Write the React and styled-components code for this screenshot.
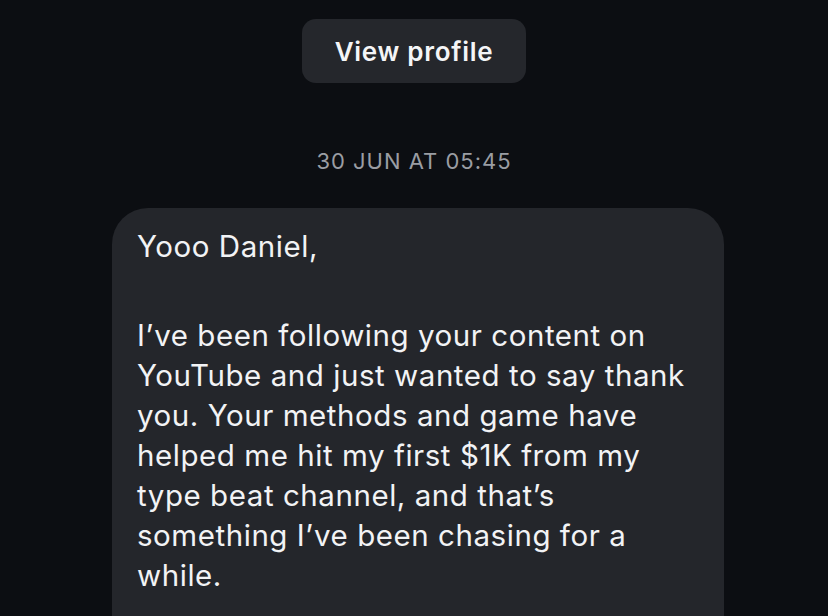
import React from 'react';
import styled, { createGlobalStyle } from 'styled-components';

const GlobalStyle = createGlobalStyle`
  html, body {
    margin: 0;
    padding: 0;
    background: #0c0e12;
  }
  body {
    font-family: Inter, "Noto Sans", sans-serif;
    -webkit-font-smoothing: antialiased;
  }
`;

const Screen = styled.div`
  width: 828px;
  height: 616px;
  overflow: hidden;
  background: #0c0e12;
  display: flex;
  flex-direction: column;
  align-items: center;
`;

const ProfileButton = styled.button`
  flex-shrink: 0;
  margin-top: 19px;
  width: 224px;
  height: 64px;
  border: none;
  border-radius: 14px;
  background: #25272c;
  color: #f4f5f7;
  font-family: Inter, sans-serif;
  font-size: 26px;
  font-weight: 600;
  letter-spacing: 0.7px;
  cursor: pointer;
`;

const Stamp = styled.div`
  flex-shrink: 0;
  margin-top: 64px;
  color: #9a9da3;
  font-size: 22px;
  line-height: 28px;
  letter-spacing: 1px;
`;

const Bubble = styled.div`
  flex-shrink: 0;
  align-self: flex-start;
  margin-left: 112px;
  margin-top: 33px;
  width: 612px;
  box-sizing: border-box;
  padding: 18px 22px 80px 25px;
  background: #24262b;
  border-radius: 36px;
  color: #f2f3f5;
  font-size: 29.5px;
  line-height: 40px;
  letter-spacing: 0.55px;
`;

const Para = styled.p`
  margin: 0;
  & + & {
    margin-top: ${({ gap }) => gap || 49}px;
  }
`;

export default function App() {
  return (
    <>
      <GlobalStyle />
      <Screen>
        <ProfileButton>View profile</ProfileButton>
        <Stamp>30 JUN AT 05:45</Stamp>
        <Bubble>
          <Para>Yooo Daniel,</Para>
          <Para>
            I’ve been following your content on YouTube and just wanted to say thank
            you. Your methods and game have helped me hit my first $1K from my type
            beat channel, and that’s something I’ve been chasing for a while.
          </Para>
        </Bubble>
      </Screen>
    </>
  );
}
